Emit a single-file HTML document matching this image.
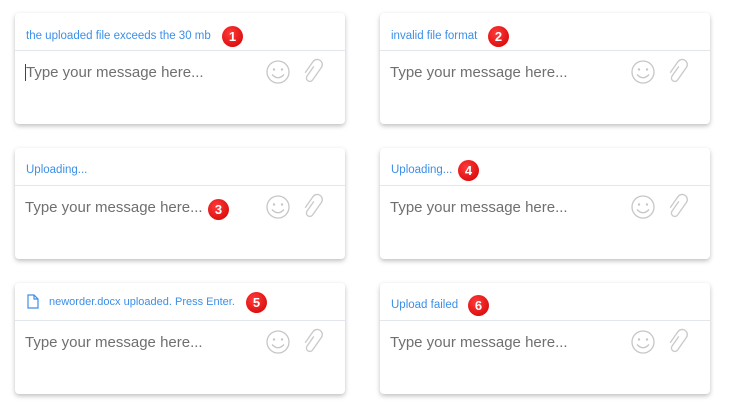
<!DOCTYPE html>
<html><head><style>
body{margin:0;width:730px;height:415px;background:#fff;font-family:"Liberation Sans",sans-serif;position:relative;overflow:hidden}
.card{position:absolute;width:330px;height:111px;background:#fff;border-radius:4px;box-shadow:0 2px 5px rgba(0,0,0,.25)}
.hd{position:absolute;left:0;right:0;top:0;height:37px;border-bottom:1px solid #e3e6ea}
.msg{position:absolute;left:11px;top:16px;font-size:11.5px;color:#3c8fe8;white-space:nowrap}
.inp{position:absolute;left:10px;top:51px;font-size:15px;color:#6f6f6f}
.b{position:absolute;width:21px;height:21px;border-radius:50%;background:radial-gradient(circle at 40% 35%,#ff3b3b,#d00000);color:#fff;font-weight:bold;font-size:13px;text-align:center;line-height:21px}
</style></head><body>
<div class="card" style="left:15px;top:13px"><div class="hd"><span class="msg" style="top:17px">the uploaded file exceeds the 30 mb</span></div><span class="inp"><span style="border-left:1px solid #444"></span>Type your message here...</span></div>
<div class="card" style="left:380px;top:13px"><div class="hd"><span class="msg" style="top:17px">invalid file format</span></div><span class="inp">Type your message here...</span></div>
<div class="card" style="left:15px;top:148px"><div class="hd"><span class="msg">Uploading...</span></div><span class="inp">Type your message here...</span></div>
<div class="card" style="left:380px;top:148px"><div class="hd"><span class="msg">Uploading...</span></div><span class="inp">Type your message here...</span></div>
<div class="card" style="left:15px;top:283px"><div class="hd"><svg style="position:absolute;left:12px;top:11px" width="12" height="15" viewBox="0 0 12 15"><path d="M1 1h6l4 4v9H1z M7 1v4h4" fill="none" stroke="#3c8fe8" stroke-width="1.2"/></svg><span class="msg" style="left:34px;top:13px;font-size:11px">neworder.docx&nbsp;uploaded. Press Enter.</span></div><span class="inp">Type your message here...</span></div>
<div class="card" style="left:380px;top:283px"><div class="hd"><span class="msg" style="top:16px">Upload failed</span></div><span class="inp">Type your message here...</span></div>

<div class="b" style="left:222px;top:26px">1</div>
<div class="b" style="left:488px;top:26px">2</div>
<div class="b" style="left:208px;top:199px">3</div>
<div class="b" style="left:458px;top:160px">4</div>
<div class="b" style="left:246px;top:292px">5</div>
<div class="b" style="left:468px;top:295px">6</div>

<svg width="730" height="415" style="position:absolute;left:0;top:0;pointer-events:none">
<defs><g id="ic">
<circle cx="0" cy="0" r="11" fill="none" stroke="#c6c6c6" stroke-width="1.3"/>
<circle cx="-4" cy="-2.5" r="1.2" fill="#c6c6c6"/><circle cx="4" cy="-2.5" r="1.2" fill="#c6c6c6"/>
<path d="M-6 2.5 Q0 9 6 2.5" fill="none" stroke="#c6c6c6" stroke-width="1.3"/>
<g transform="translate(35 0) rotate(35) scale(0.85)">
<path d="M-3 -6 V8 a4 4 0 0 0 8 0 V-10 a6 6 0 0 0 -12 0 V6" fill="none" stroke="#cacaca" stroke-width="1.6"/>
</g>
</g></defs>
<use href="#ic" x="278" y="72"/><use href="#ic" x="643" y="72"/>
<use href="#ic" x="278" y="207"/><use href="#ic" x="643" y="207"/>
<use href="#ic" x="278" y="342"/><use href="#ic" x="643" y="342"/>
</svg>
</body></html>
